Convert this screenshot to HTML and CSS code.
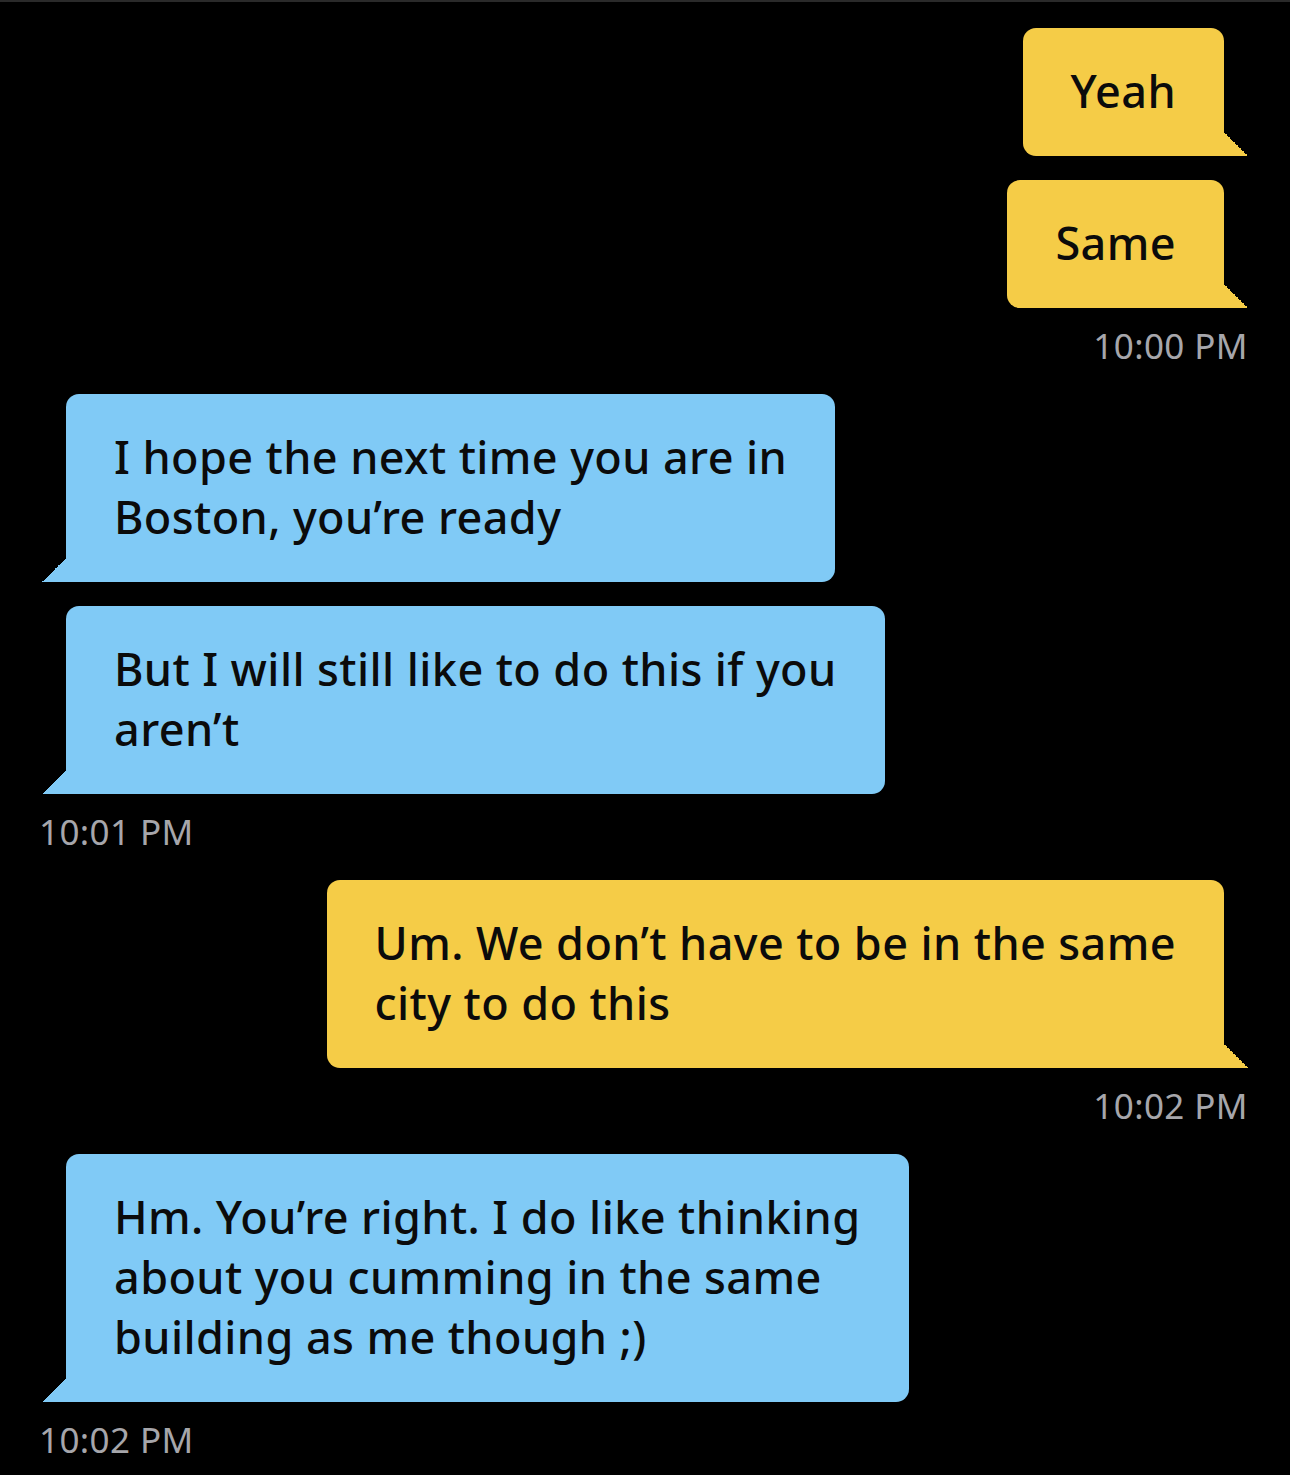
FILE: index.html
```html
<!DOCTYPE html>
<html lang="en">
<head>
<meta charset="utf-8">
<title>Chat</title>
<link rel="stylesheet" href="styles.css">
</head>
<body>
<main class="chat">
  <section class="group out">
    <div class="bubble yellow">Yeah</div>
    <div class="bubble yellow">Same</div>
    <div class="time">10:00 PM</div>
  </section>
  <section class="group in">
    <div class="bubble blue">I hope the next time you are in<br>Boston, you’re ready</div>
    <div class="bubble blue">But I will still like to do this if you<br>aren’t</div>
    <div class="time">10:01 PM</div>
  </section>
  <section class="group out">
    <div class="bubble yellow">Um. We don’t have to be in the same<br>city to do this</div>
    <div class="time">10:02 PM</div>
  </section>
  <section class="group in">
    <div class="bubble blue">Hm. You’re right. I do like thinking<br>about you cumming in the same<br>building as me though ;)</div>
    <div class="time">10:02 PM</div>
  </section>
</main>
</body>
</html>
```
FILE: styles.css
```css
html, body {
  margin: 0;
  padding: 0;
  background: #000;
}
body {
  width: 1290px;
  height: 1475px;
  overflow: hidden;
  font-family: "Noto Sans", "Open Sans", sans-serif;
}
.chat {
  border-top: 2px solid #2a2a2a;
  padding: 26px 42px 0 42px;
  display: flex;
  flex-direction: column;
  gap: 28px;
}
.group {
  display: flex;
  flex-direction: column;
  gap: 24px;
}
.group.out { align-items: flex-end; }
.group.in { align-items: flex-start; }
.bubble {
  position: relative;
  font-size: 45px;
  font-weight: 500;
  letter-spacing: 0.4px;
  line-height: 60px;
  color: #0b0b0b;
  padding: 33px 48px 35px 48px;
  border-radius: 13px;
  white-space: nowrap;
}
.yellow {
  background: #f5cc47;
  margin-right: 24px;
  border-bottom-right-radius: 0;
}
.blue {
  background: #80caf6;
  margin-left: 24px;
  border-bottom-left-radius: 0;
}
.bubble::after {
  content: "";
  position: absolute;
  bottom: 0;
  width: 24px;
  height: 24px;
}
.yellow::after {
  right: -24px;
  background: linear-gradient(to top right, #f5cc47 50%, transparent 50%);
}
.blue::after {
  left: -24px;
  background: linear-gradient(to top left, #80caf6 50%, transparent 50%);
}
.time {
  font-size: 35px;
  letter-spacing: 0.4px;
  line-height: 40px;
  color: #a6a6ab;
  margin-top: -6px;
}
.group.in .time {
  margin-left: -3px;
}
```
